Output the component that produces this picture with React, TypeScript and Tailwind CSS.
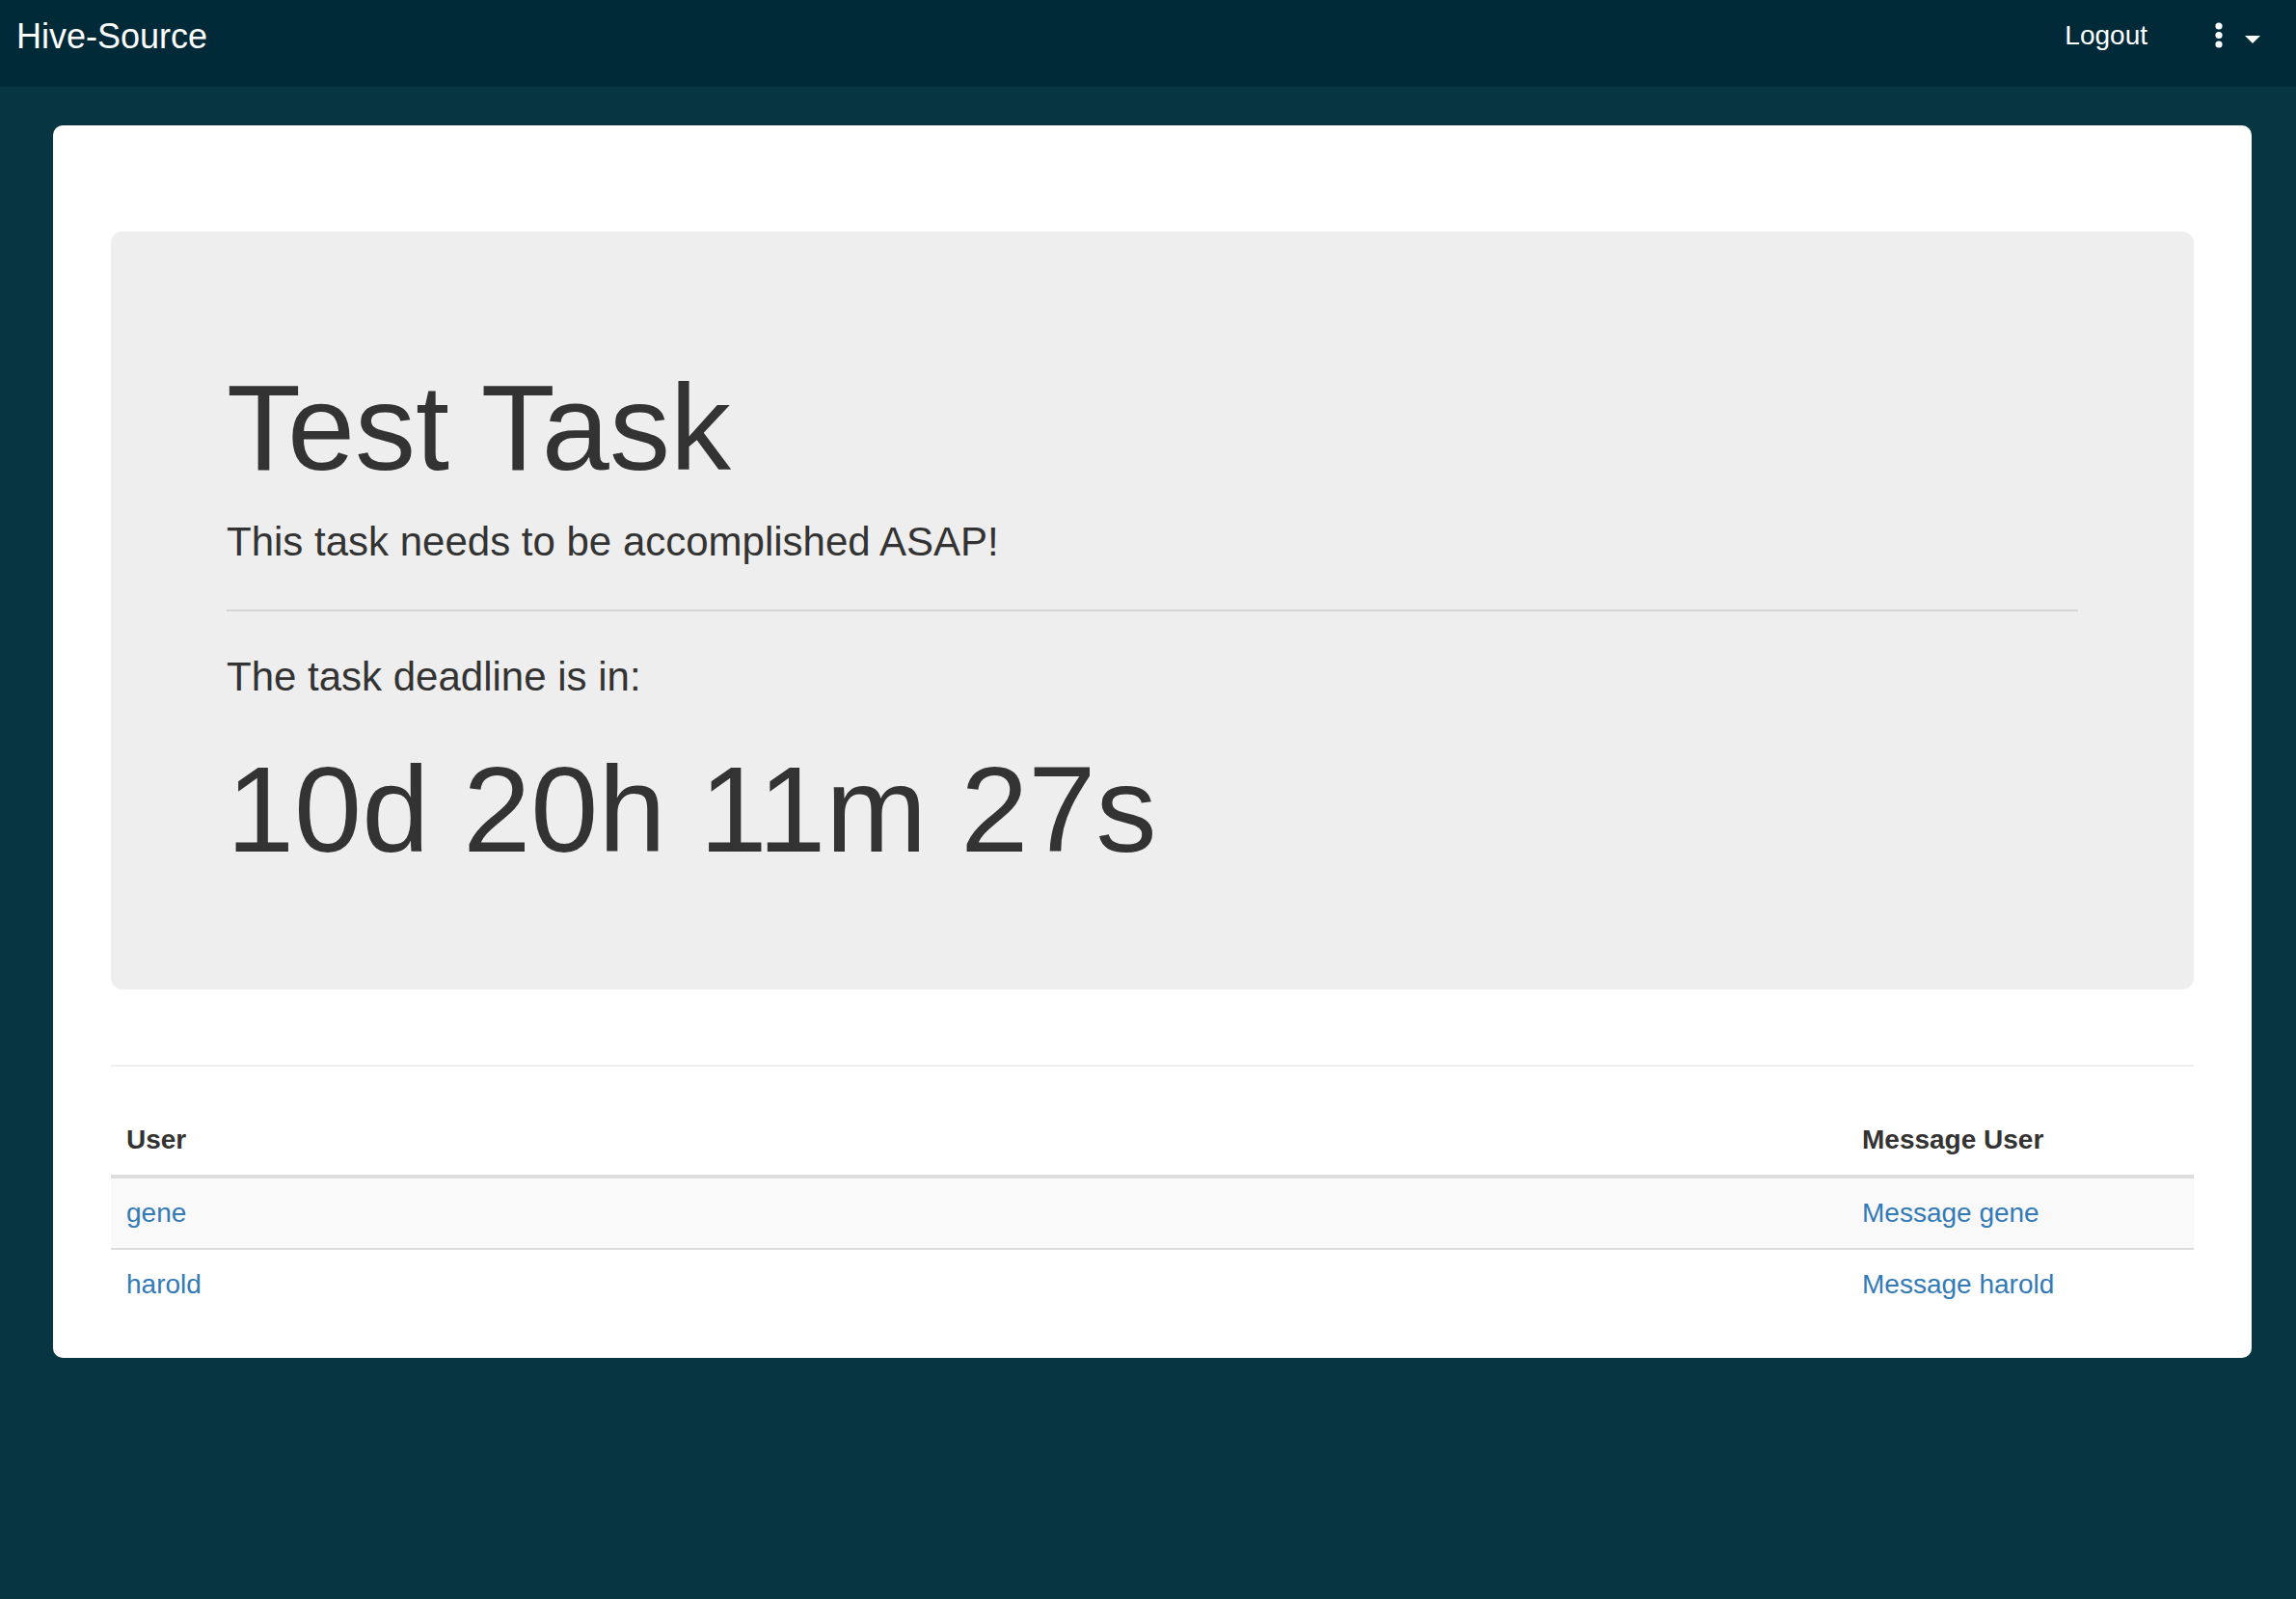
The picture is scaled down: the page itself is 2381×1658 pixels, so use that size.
const users = ['gene', 'harold'];

function DotsIcon() {
  return (
    <svg width="8" height="28" viewBox="0 0 8 28" fill="#ffffff">
      <circle cx="4" cy="4" r="3.6" />
      <circle cx="4" cy="13.5" r="3.6" />
      <circle cx="4" cy="23" r="3.6" />
    </svg>
  );
}

export default function App() {
  return (
    <div className="min-h-[1658px] bg-[#073642] font-['Liberation_Sans',Arial,sans-serif] text-[#333333]">
      {/* Navbar */}
      <nav className="h-[90px] bg-[#012a39]">
        <div className="flex h-[73px] items-center pl-[17px] pr-[37px]">
          <a className="mt-[2px] text-[36px] leading-none text-white">Hive-Source</a>
          <div className="ml-auto flex items-center">
            <a className="text-[28px] leading-none text-white">Logout</a>
            <span className="ml-[70px] flex">
              <DotsIcon />
            </span>
            <span className="ml-[23px] mt-[8px] h-0 w-0 border-x-[8px] border-t-[8px] border-x-transparent border-t-white" />
          </div>
        </div>
      </nav>

      {/* Card */}
      <div className="ml-[55px] mt-[40px] w-[2280px] rounded-[10px] bg-white px-[60px] pb-[40px] pt-[110px]">
        <div className="rounded-[12px] bg-[#eeeeee] pb-[117px] pl-[120px] pr-[120px] pt-[135px]">
          <h1 className="text-[126px] leading-[138px]">Test Task</h1>
          <p className="mt-[19px] text-[42px] leading-[60px]">This task needs to be accomplished ASAP!</p>
          <div className="mt-[40px] h-[2px] bg-[#d5d5d5]" />
          <p className="mt-[38px] text-[42px] leading-[60px]">The task deadline is in:</p>
          <div className="mt-[39px] text-[126px] leading-[138px]">10d 20h 11m 27s</div>
        </div>

        <div className="mt-[78px] h-[2px] bg-[#eeeeee]" />

        <table className="mt-[40px] w-full text-left text-[28px] leading-[40px]">
          <thead>
            <tr className="border-b-[4px] border-[#dddddd]">
              <th className="p-[16px] font-bold">User</th>
              <th className="w-[360px] p-[16px] font-bold">Message User</th>
            </tr>
          </thead>
          <tbody>
            {users.map((u, i) => (
              <tr
                key={u}
                className={i === 0 ? 'border-b-[2px] border-[#dddddd] bg-[#f9f9f9]' : ''}
              >
                <td className="p-[16px]">
                  <a className="text-[#337ab7]">{u}</a>
                </td>
                <td className="p-[16px]">
                  <a className="text-[#337ab7]">Message {u}</a>
                </td>
              </tr>
            ))}
          </tbody>
        </table>
      </div>
    </div>
  );
}
